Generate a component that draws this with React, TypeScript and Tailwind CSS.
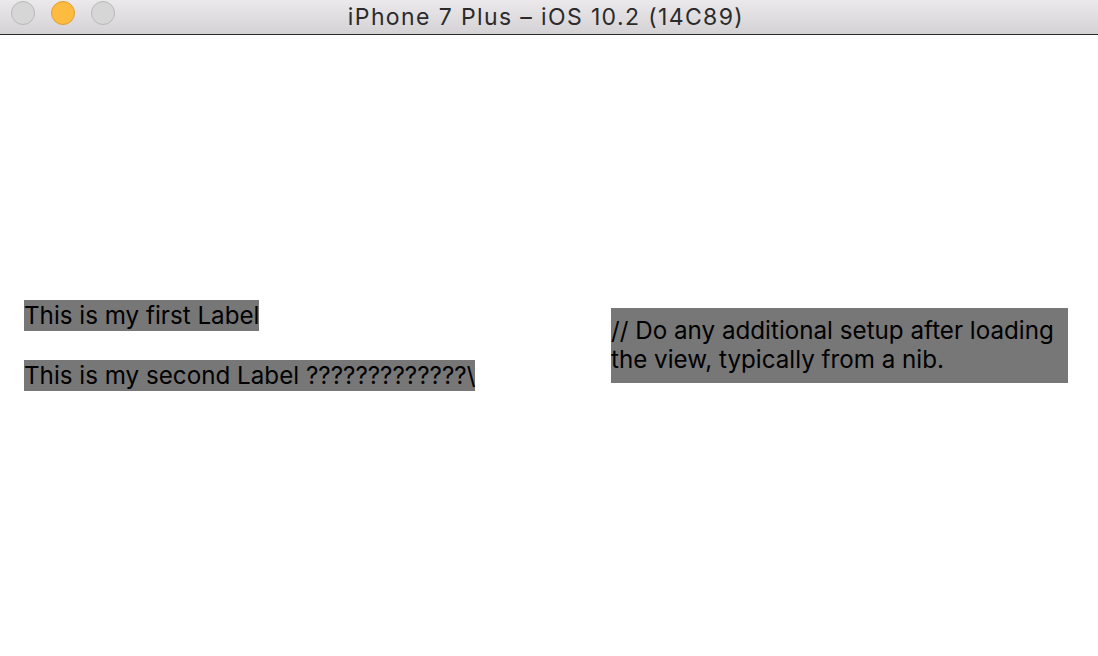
export default function App() {
  return (
    <div className="flex h-screen w-full flex-col overflow-hidden bg-white font-['Inter',sans-serif] text-black">
      {/* Simulator window title bar */}
      <div className="relative flex h-[35px] shrink-0 items-center justify-center border-b border-[#2a2a2a] bg-gradient-to-b from-[#ebe9eb] to-[#d4d2d4]">
        <div className="absolute left-[11px] top-[1px] flex gap-[16px]">
          <span className="h-[24px] w-[24px] rounded-full border border-[#b9b9b9] bg-[#d6d6d6]" />
          <span className="h-[24px] w-[24px] rounded-full border border-[#de9f34] bg-[#fdbc40]" />
          <span className="h-[24px] w-[24px] rounded-full border border-[#b9b9b9] bg-[#d6d6d6]" />
        </div>
        <span className="pr-[6px] text-[23px] leading-none tracking-[0.06em] text-[#2b2b2b]">iPhone 7 Plus – iOS 10.2 (14C89)</span>
      </div>

      {/* Simulator screen */}
      <div className="flex flex-1 items-center">
        <div className="flex w-[611px] flex-col items-start gap-[29px] pl-[24px]">
          <span className="h-[31px] bg-[#777777] text-[24.2px] leading-[31px]">This is my first Label</span>
          <span className="h-[31px] bg-[#777777] text-[24.2px] leading-[31px]">This is my second Label ?????????????\</span>
        </div>
        <div className="w-[457px] bg-[#777777] pt-[8px] pb-[9px] text-[24.2px] leading-[29px]">
          // Do any additional setup after loading the view, typically from a nib.
        </div>
      </div>
    </div>
  );
}
